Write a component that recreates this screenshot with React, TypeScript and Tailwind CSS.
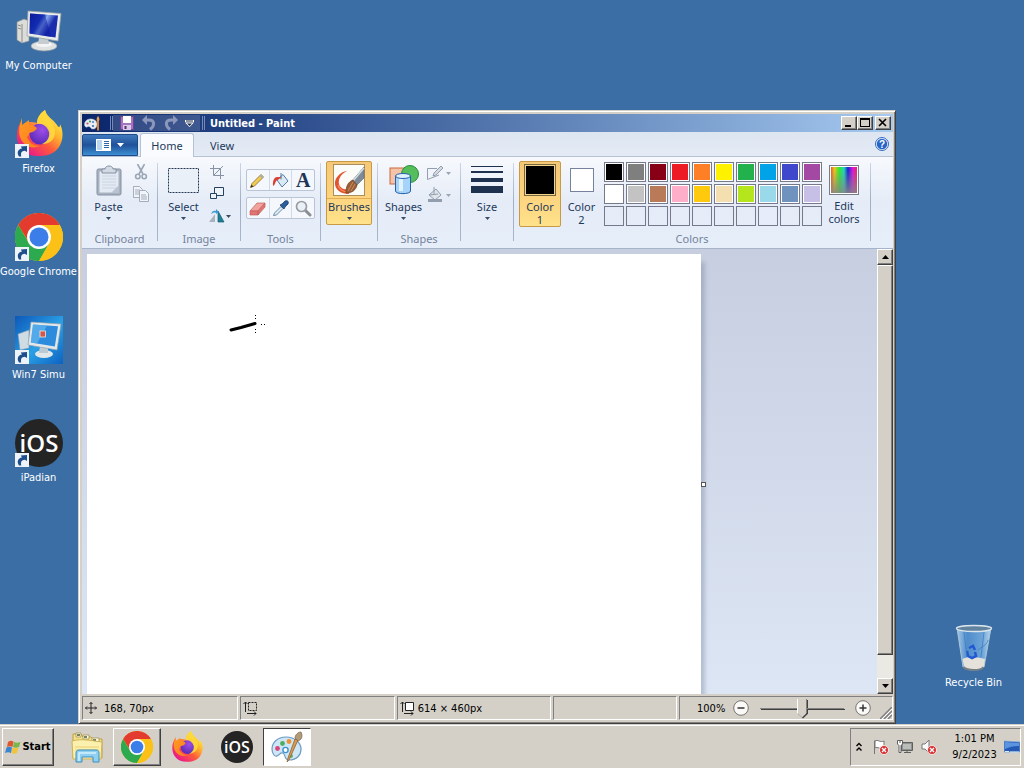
import React, { useId } from "react";

const tahoma = "font-['DejaVu_Sans_Condensed','DejaVu_Sans',sans-serif]";

function ShortcutBadge() {
  return (
    <svg viewBox="0 0 14 14" className="absolute bottom-0 left-0 size-3.5" aria-hidden="true">
      <rect width="14" height="14" fill="#eef3fa" />
      <path d="M4 12.500C1.500 9 3 5.200 7 4.600L5.800 2.400 12 2v6L9.800 6.800C6.500 7 5.500 9 6.300 12.500Z" fill="#1f4e8c" />
    </svg>
  );
}

function ComputerIcon({ className }: { className?: string }) {
  const id = useId();
  return (
    <svg viewBox="0 0 48 48" className={className} aria-hidden="true">
      <defs>
        <linearGradient id={id} x1="0" y1="0" x2="1" y2="0.5">
          <stop offset="0" stopColor="#0b1a96" />
          <stop offset="0.4" stopColor="#1c3fc4" />
          <stop offset="0.55" stopColor="#86a8ee" />
          <stop offset="0.8" stopColor="#1a2cae" />
        </linearGradient>
      </defs>
      <path d="M2 15 9 12 14 14V34L7 36 2 33Z" fill="#dcdcd8" stroke="#8c9096" strokeWidth=".7" />
      <path d="M7 17v18M3 18l3 1M3 21l3 1" stroke="#8a8c88" strokeWidth="1" />
      <ellipse cx="29" cy="39" rx="13" ry="5" fill="#dfe2e2" stroke="#8f969c" strokeWidth=".7" />
      <ellipse cx="29" cy="37.500" rx="8" ry="2.500" fill="#f4f5f4" />
      <path d="M24 31h9l1 6h-11Z" fill="#c6cccf" />
      <path d="M13 4 46 6.500 43 34 12 29Z" fill="#e9ece8" stroke="#9ba3a8" strokeWidth=".8" />
      <path d="M15 6.500 43 8.500 40.500 30.500 14.500 26.500Z" fill={`url(#${id})`} />
      <path d="M15 6.500 30 7.500 36 30 14.500 26.500Z" fill="#0919a0" opacity=".5" />
    </svg>
  );
}

function FirefoxIcon({ className }: { className?: string }) {
  const id = useId();
  return (
    <svg viewBox="0 0 48 48" className={className} aria-hidden="true">
      <defs>
        <linearGradient id={`${id}a`} x1=".85" y1=".1" x2=".15" y2=".9">
          <stop offset="0" stopColor="#fff04a" />
          <stop offset=".3" stopColor="#ffb52e" />
          <stop offset=".6" stopColor="#ff5a3a" />
          <stop offset="1" stopColor="#e8188c" />
        </linearGradient>
        <radialGradient id={`${id}b`} cx=".6" cy=".3" r=".7">
          <stop offset="0" stopColor="#a04de8" />
          <stop offset="1" stopColor="#5a2cb8" />
        </radialGradient>
        <linearGradient id={`${id}c`} x1="0" y1="0" x2="1" y2="1">
          <stop offset="0" stopColor="#ff9c24" />
          <stop offset="1" stopColor="#ff7a1c" />
        </linearGradient>
      </defs>
      <path d="M30 0c2 7 8 9 12 15 2 3 3 3 3-1 4 8 3 17-1 23-4 6-11 9-19 9C10 47 1 37 2 24c0-5 2-10 5-14v6c2-2 4-3 7-4 3 0 6 0 8 1 0-6 4-10 8-13Z" fill={`url(#${id}a)`} />
      <circle cx="25" cy="24" r="10.500" fill={`url(#${id}b)`} />
      <path d="M7 8v7l7-5v5c3 0 6 1 8 3-1 3-4 4-8 5 0 2-1 3-2 4 2 5 6 9 13 9-9 4-17-1-20-9-2-6 0-13 2-19Z" fill={`url(#${id}c)`} />
      <path d="M22 14c5-1 10 2 12 8 1 5-2 10-7 12 9 0 14-6 13-14-1-7-8-11-10-20-5 3-8 8-8 14Z" fill="#ffd93c" opacity=".9" />
    </svg>
  );
}

function ChromeIcon({ className }: { className?: string }) {
  return (
    <svg viewBox="0 0 48 48" className={className} aria-hidden="true">
      <circle cx="24" cy="24" r="24" fill="#fbc116" />
      <path d="M3.200 12A24 24 0 0 1 44.800 12H24L14.500 30Z" fill="#e33b2e" />
      <path d="M3.200 12A24 24 0 0 0 24 48L34.400 30 24 34 14 30Z" fill="#2da94f" />
      <path d="M24 12h20.800A24 24 0 0 1 24 48l10.400-18Z" fill="#fbc116" />
      <circle cx="24" cy="24" r="12" fill="#fff" />
      <circle cx="24" cy="24" r="9.500" fill="#3b7de9" />
    </svg>
  );
}

function WinSimuIcon({ className }: { className?: string }) {
  const id = useId();
  return (
    <svg viewBox="0 0 48 48" className={className} aria-hidden="true">
      <defs>
        <linearGradient id={id} x1="0" y1="0" x2="1" y2="1">
          <stop offset="0" stopColor="#0d58b8" />
          <stop offset=".55" stopColor="#2aa0e6" />
          <stop offset="1" stopColor="#0c62c0" />
        </linearGradient>
      </defs>
      <rect width="48" height="48" fill={`url(#${id})`} />
      <path d="M3 18 14 14V32L5 34Z" fill="#cfdce4" stroke="#7e98ac" strokeWidth=".6" />
      <ellipse cx="29" cy="38" rx="9" ry="4" fill="#e1e8ea" />
      <path d="M25 30h8v7h-9Z" fill="#bccbd3" />
      <path d="M16 6 46 8 42 34 13 29Z" fill="#e2e8ea" stroke="#8fa2ae" strokeWidth=".7" />
      <path d="M18 8.500 43 10.200 39.800 30.500 15.800 26.500Z" fill="#2c8bdc" />
      <path d="M18 8.500 32 9.500 22 27.500 15.800 26.500Z" fill="#6cc0f4" opacity=".6" />
      <rect x="25" y="15" width="5.500" height="6" fill="#d4584a" stroke="#f2e5dc" strokeWidth=".8" />
    </svg>
  );
}

function IosIcon({ className }: { className?: string }) {
  return (
    <svg viewBox="0 0 48 48" className={className} aria-hidden="true">
      <circle cx="24" cy="24" r="24" fill="#242424" />
      <text x="24" y="33" textAnchor="middle" fontFamily="'Open Sans', sans-serif" fontWeight="600" fontSize="24" fill="#fff">iOS</text>
    </svg>
  );
}

function RecycleIcon({ className }: { className?: string }) {
  const id = useId();
  return (
    <svg viewBox="0 0 48 48" className={className} aria-hidden="true">
      <defs>
        <linearGradient id={id} x1="0" y1="0" x2="1" y2="0">
          <stop offset="0" stopColor="#a5c8e6" />
          <stop offset=".3" stopColor="#4f8ccb" />
          <stop offset=".75" stopColor="#6ea5d8" />
          <stop offset="1" stopColor="#b9d6ec" />
        </linearGradient>
      </defs>
      <path d="M7 4 13 43c3 4 18 4 21 0L41 4Z" fill={`url(#${id})`} stroke="#a9c4da" strokeWidth="1" />
      <path d="M12.500 35c4-2 7-2 10-1 4-1 8 0 12.500 1l-1 8c-4 4-17 4-20 0Z" fill="#e4e2da" />
      <path d="M13.500 43c4 4 17 4 20 0" stroke="#777e84" strokeWidth="2" fill="none" />
      <path d="M19 24l4-2 2 4M17 27l1 5 4 2 4-2-1-4" stroke="#2258d2" strokeWidth="2.500" fill="none" />
      <path d="M28 26c5-4 9-5 10-10M14 8l3 25M34 8l-3 25" stroke="#3b77bd" strokeWidth="1" fill="none" opacity=".7" />
      <ellipse cx="24" cy="4.500" rx="17.500" ry="3" fill="#61839f" stroke="#dbe6ec" strokeWidth="1.400" />
    </svg>
  );
}

function PaletteIcon({ className }: { className?: string }) {
  return (
    <svg viewBox="0 0 32 32" className={className} aria-hidden="true">
      <path d="M15 6C6 6 1 12 1 18c0 5 3 8 5 7 3-1 3-4 6-3 3 2 1 7 6 7 8 0 12-5 12-11S24 6 15 6Z" fill="#cfe6f6" stroke="#6c9cc0" strokeWidth="1.200" />
      <circle cx="6.500" cy="17.500" r="2.400" fill="#d8457a" />
      <circle cx="11.500" cy="12.500" r="2.400" fill="#4bae62" />
      <circle cx="18" cy="10.500" r="2.400" fill="#f08f34" />
      <circle cx="14.500" cy="19" r="2.600" fill="#fff" stroke="#3d94cf" strokeWidth="1.400" />
      <circle cx="20" cy="25" r="2" fill="#58b86c" />
      <path d="M27 9 18 29l-2 2 1-4 7-19Z" fill="#d79a55" stroke="#8f6232" strokeWidth=".8" />
      <path d="M24 7c0-3 3-6 6-6l1 3c0 3-1 5-4 6Z" fill="#b39a78" stroke="#76624a" strokeWidth=".7" />
    </svg>
  );
}

function PaintWindowIcon() {
  return (
    <svg viewBox="0 0 16 16" className="size-4" aria-hidden="true">
      <path d="M6.500 4C2.500 4 .5 7 .5 9.500c0 2 1.500 3 2.500 2.500s2-1 3 0 1 2 3 2c3 0 4-2.500 4-5S11 4 6.500 4Z" fill="#e8edf4" stroke="#b6c4d6" strokeWidth=".6" />
      <circle cx="3.500" cy="8.500" r="1.100" fill="#c8506a" />
      <circle cx="6" cy="6.500" r="1.100" fill="#3f9c68" />
      <circle cx="9" cy="7" r="1.100" fill="#4a86c8" />
      <circle cx="9" cy="11" r="1.100" fill="#3a6db0" />
      <path d="M13 6h2v9l-1 1-1-1Z" fill="#d9822b" />
      <path d="M13 6c-1-2 0-4 1-5 1 1 2 3 1 5Z" fill="#e8a04a" />
    </svg>
  );
}

function FolderIcon({ className }: { className?: string }) {
  return (
    <svg viewBox="0 0 32 32" className={className} aria-hidden="true">
      <path d="M2 3h8l2 3h8l2 2h9v19H2Z" fill="#f5e08a" stroke="#c0a03e" strokeWidth="1" />
      <path d="M5 2h5v4H5ZM12 4h6v4h-6ZM21 7h7v4h-7Z" fill="#fffbe2" stroke="#a39354" strokeWidth=".8" />
      <path d="M6 4h3M13 6h3M22 9h3" stroke="#4b5f33" strokeWidth="1.300" />
      <path d="M1 10c10-3 20 0 30 1l-1 17H2Z" fill="#fbf0ae" stroke="#cfb355" strokeWidth="1" />
      <path d="M4 16h24M4 19h24" stroke="#e9d173" strokeWidth="1" />
      <path d="M5 31V22c0-2 1-3 3-3h17c2 0 3 1 3 3v9h-6v-5H11v5Z" fill="#8fd0f2" stroke="#3d8fc0" strokeWidth="1" />
      <path d="M8 30v-8h17" stroke="#d6f1fc" strokeWidth="1.500" fill="none" />
    </svg>
  );
}

function DownArrow({ className = "fill-[#3a4a62]" }: { className?: string }) {
  return (
    <svg viewBox="0 0 5 3" className={`h-[3px] w-[5px] shrink-0 ${className}`} aria-hidden="true">
      <path d="M0 0h5L2.500 3Z" />
    </svg>
  );
}

const desktopIcons = [
  { name: "My Computer", Icon: ComputerIcon, shortcut: false },
  { name: "Firefox", Icon: FirefoxIcon, shortcut: true },
  { name: "Google Chrome", Icon: ChromeIcon, shortcut: true },
  { name: "Win7 Simu", Icon: WinSimuIcon, shortcut: true },
  { name: "iPadian", Icon: IosIcon, shortcut: true },
];

function DesktopItem({ name, Icon, shortcut }: { name: string; Icon: React.FC<{ className?: string }>; shortcut: boolean }) {
  return (
    <button className="flex w-[77px] flex-col items-center gap-1 whitespace-nowrap">
      <span className="relative size-12">
        <Icon className="size-12" />
        {shortcut && <ShortcutBadge />}
      </span>
      <span className="text-[11px] leading-[14px] text-white">{name}</span>
    </button>
  );
}

function Group({ label, children, className = "" }: { label?: string; children: React.ReactNode; className?: string }) {
  return (
    <>
      <section aria-label={label} className={`flex h-[85px] flex-col justify-between ${className}`}>
        <div className="flex">{children}</div>
        {label && <div className="text-center text-[11px] leading-[14px] text-[#75839b]">{label}</div>}
      </section>
      <div className="mt-0.5 h-[78px] w-px shrink-0 bg-gradient-to-b from-[#cdd6e4] via-[#9fafc6] to-[#a9b5c9]" />
    </>
  );
}

function BigButton({ label, children, active = false, className = "" }: { label: string; children: React.ReactNode; active?: boolean; className?: string }) {
  return (
    <button
      className={`flex h-16 flex-col items-center rounded-[2px] border ${
        active ? "border-[#c79a45] bg-gradient-to-b from-[#f5c877] via-[#fcd27e] to-[#ffe28b]" : "border-transparent"
      } ${className}`}
    >
      <span className={`flex h-[37px] w-full items-center justify-center border-b ${active ? "border-[#e3ae56]" : "border-transparent"}`}>{children}</span>
      <span className="text-[11px] leading-4 text-[#1e395b]">{label}</span>
      <span className="mt-0.5"><DownArrow /></span>
    </button>
  );
}

const swatches = [
  "bg-black", "bg-[#7f7f7f]", "bg-[#880015]", "bg-[#ed1c24]", "bg-[#ff7f27]", "bg-[#fff200]", "bg-[#22b14c]", "bg-[#00a2e8]", "bg-[#3f48cc]", "bg-[#a349a4]",
  "bg-white", "bg-[#c3c3c3]", "bg-[#b97a57]", "bg-[#ffaec9]", "bg-[#ffc90e]", "bg-[#f3dfb0]", "bg-[#b5e61d]", "bg-[#99d9ea]", "bg-[#7092be]", "bg-[#c8bfe7]",
  "", "", "", "", "", "", "", "", "", "",
];

const toolIcons: { name: string; art: React.ReactNode }[] = [
  { name: "Pencil", art: <><path d="M1.500 15.500 3 11.500 12 2.500l2.500 2.500-9 9Z" fill="#f2cc52" stroke="#856a2e" strokeWidth=".8" /><path d="m12 2.500 2.500 2.500-1.500 1.500L10.500 4Z" fill="#a8b0ad" /><path d="m1.500 15.500 1-2.800 1.800 1.800Z" fill="#222" /></> },
  { name: "Fill with color", art: <><path d="m5 8 6-5.500 5 6.500-6 6Z" fill="#dbe9f4" stroke="#557da3" /><path d="M6 5C2.500 4.500.5 8 1 14c2.500-1 2-5 4.500-6L10 5Z" fill="#dd4033" /><path d="M9 1v6.500" stroke="#557da3" fill="none" /></> },
  { name: "Text", art: <path d="M0 0" /> },
  { name: "Eraser", art: <><path d="M1 11 8 3h8l-7 8Z" fill="#f3a39d" stroke="#c25e5c" strokeWidth=".7" /><path d="M1 11h8v4H1ZM9 11l7-8v4l-7 8Z" fill="#e27673" stroke="#c25e5c" strokeWidth=".7" /></> },
  { name: "Color picker", art: <><path d="m1.500 15.500 1-2.500 6.500-6.500 2 2-6.500 6.500Z" fill="#dcebf5" stroke="#537596" strokeWidth=".8" /><path d="m8 5 2-1 3-3c3-1 4 1 3 3l-3 3-1 2Z" fill="#2c5d9c" stroke="#1c3f70" strokeWidth=".8" /></> },
  { name: "Magnifier", art: <><path d="m10.500 10.500 4.500 4.500" stroke="#8b8d92" strokeWidth="3" strokeLinecap="round" /><circle cx="6.500" cy="6.500" r="5" fill="#e9f1f7" stroke="#9a9da3" strokeWidth="1.700" /></> },
];

function ToolRow({ tools }: { tools: typeof toolIcons }) {
  return (
    <div className="flex h-[22px] w-[69px] divide-x divide-[#d2dae6] rounded-[2px] border border-[#b9c5d6] bg-[#f4f7fb]">
      {tools.map((t) => (
        <button key={t.name} aria-label={t.name} className="flex flex-1 items-center justify-center">
          {t.name === "Text" ? (
            <span className="font-['Liberation_Serif',serif] text-xl leading-5 font-bold text-[#1d3556]">A</span>
          ) : (
            <svg viewBox="0 0 17 17" className="size-[17px]" fill="none">{t.art}</svg>
          )}
        </button>
      ))}
    </div>
  );
}

function Ribbon() {
  return (
    <div className="flex h-[92px] shrink-0 overflow-hidden border-b border-[#a6b4ca] bg-gradient-to-b from-[#f7f9fd] via-[#e5ecf7] to-[#e6eefa] pt-1 font-['Noto_Sans',sans-serif]">
      <Group label="Clipboard" className="w-[75px]">
        <BigButton label="Paste" className="ml-1 w-[45px]">
          <svg viewBox="0 0 26 31" className="h-[31px] w-[26px]" aria-hidden="true">
            <rect x="1" y="4" width="24" height="26" rx="1.500" fill="#a9b2bf" stroke="#8491a3" />
            <rect x="3.500" y="6.500" width="19" height="21" fill="#e3eaf3" />
            <path d="M6 11h14M6 14h14M6 17h14M6 20h14M6 23h14" stroke="#cbd5e2" />
            <path d="M6 4h3c0-4 8-4 8 0h3v4H6Z" fill="#d3dae3" stroke="#8491a3" />
            <path d="m15 28 8-8v8Z" fill="#b8c2d0" />
          </svg>
        </BigButton>
        <div className="flex flex-col gap-1 pt-0.5">
          <button aria-label="Cut" className="flex h-[18px] w-[19px] items-center justify-center">
            <svg viewBox="0 0 14 16" className="h-4 w-3.5" fill="none" stroke="#9aa5b5" strokeWidth="1.600">
              <path d="M3.500 0 9 10M10.500 0 5 10" /><circle cx="3.800" cy="12.500" r="2.200" /><circle cx="10.200" cy="12.500" r="2.200" />
            </svg>
          </button>
          <button aria-label="Copy" className="flex h-[18px] w-[19px] items-center justify-center">
            <svg viewBox="0 0 16 16" className="size-4" fill="#f1f4f8" stroke="#a3adbc">
              <path d="M.5.500h6l3 3v8h-9Z" /><path d="M2 4h5M2 6h5M2 8h4" /><path d="M6.500 4.500h6l3 3v8h-9Z" /><path d="M8 9h5M8 11h6M8 13h6" />
            </svg>
          </button>
        </div>
      </Group>

      <Group label="Image" className="w-[82px]">
        <BigButton label="Select" className="ml-0.5 w-[47px]">
          <svg viewBox="0 0 31 25" className="h-[25px] w-[31px]" aria-hidden="true">
            <rect x=".5" y=".5" width="30" height="24" fill="#eaf0f8" stroke="#24364f" strokeDasharray="2 1" />
          </svg>
        </BigButton>
        <div className="flex flex-col gap-1 pt-0.5">
          <button aria-label="Crop" className="flex h-[18px] w-5 items-center justify-center">
            <svg viewBox="0 0 14 14" className="size-3.5" fill="none" stroke="#8793a5"><path d="M3.500 0v10.500H14M0 3.500h10.500V14M4 10l9-9" /></svg>
          </button>
          <button aria-label="Resize" className="flex h-[18px] w-5 items-center justify-center">
            <svg viewBox="0 0 14 14" className="size-3.5" fill="#eef3fa" stroke="#23425f"><path d="M4.500.500h9v8h-9Z" /><path d="M.5 6.500h6v5h-6Z" /></svg>
          </button>
          <button aria-label="Rotate" className="flex h-[18px] w-[25px] items-center gap-px pl-0.5">
            <svg viewBox="0 0 16 14" className="h-3.5 w-4"><path d="m6 5-6 8h6Z" fill="#a9b2bd" /><path d="M9 2v11h6Z" fill="#1d7f92" stroke="#165e70" strokeWidth=".7" /><path d="M2 5c1-3 3-4 5-3L7 0l3 3-3 2V4C5 3 4 4 2 5Z" fill="#3b9bd0" /></svg>
            <DownArrow />
          </button>
        </div>
      </Group>

      <Group label="Tools" className="w-[79px]">
        <div className="flex flex-col gap-1.5 pt-2 pl-[5px]">
          <ToolRow tools={toolIcons.slice(0, 3)} />
          <ToolRow tools={toolIcons.slice(3)} />
        </div>
      </Group>

      <Group className="w-14 items-center">
        <BigButton label="Brushes" active className="w-[46px]">
          <svg viewBox="0 0 32 32" className="size-8" aria-hidden="true">
            <rect x=".5" y=".5" width="31" height="31" fill="#fbfbf8" stroke="#ab8e5c" />
            <path d="M31 3v11l-8 8-4-5Z" fill="#7d8b99" stroke="#5c6570" strokeWidth=".6" />
            <path d="M31 4 20 17l2 3" stroke="#d5dde4" strokeWidth="1.500" fill="none" />
            <path d="M14 7C7 8 1.500 14 2 20c.5 6 6 10 14 10l-1-5c-4 1-8-1-9-5-1-5 2-10 8-13Z" fill="#e2532f" />
            <path d="M5 21c1 4 5 7 10 7" stroke="#f58a5e" strokeWidth="1.200" fill="none" />
            <path d="M13 29c0-7 2-11 7-13l4 5c-1 5-5 8-11 8Z" fill="#9b5e37" stroke="#6b3d21" strokeWidth=".7" />
            <path d="m15 27 5-9M18 27l4-7" stroke="#c78d5f" />
          </svg>
        </BigButton>
      </Group>

      <Group label="Shapes" className="w-[82px]">
        <BigButton label="Shapes" className="ml-[3px] w-[45px]">
          <svg viewBox="0 0 30 30" className="size-[30px]" aria-hidden="true">
            <rect x="1" y="3" width="16" height="16" fill="#f5c3a8" stroke="#c9683d" /><circle cx="21" cy="9" r="8.500" fill="#54bd5c" stroke="#2c8c3c" />
            <path d="M6.500 11v15c0 3.500 15 3.500 15 0V11Z" fill="#a5d3fa" stroke="#2462ac" /><path d="M10 12v14h4V12Z" fill="#e1f2ff" /><ellipse cx="14" cy="11" rx="7.500" ry="2.500" fill="#dff0fe" stroke="#2462ac" />
          </svg>
        </BigButton>
        <div className="flex flex-col gap-1 pt-[3px]">
          <button aria-label="Shape outline" className="flex h-[18px] w-[26px] items-center gap-0.5">
            <svg viewBox="0 0 18 16" className="h-4 w-[18px]" fill="none" stroke="#929eae"><path d="M11 3.500H1.500v11L13 10" /><path d="m7 11 1-3 7-7 2 2-7 7Z" fill="#d4dae2" /></svg>
            <DownArrow className="fill-[#9aa5b5]" />
          </button>
          <button aria-label="Shape fill" className="flex h-[18px] w-[26px] items-center gap-0.5">
            <svg viewBox="0 0 18 16" className="h-4 w-[18px]" stroke="#929eae"><path d="M3 8 10 2l5 6-6 5Z" fill="#e0e5ec" /><path d="M8 0v7M3 8l9-1" fill="none" /><path d="M2 13.500h14" strokeWidth="3" /></svg>
            <DownArrow className="fill-[#9aa5b5]" />
          </button>
        </div>
      </Group>

      <Group className="w-[52px] items-center">
        <BigButton label="Size" className="w-11">
          <svg viewBox="0 0 32 28" className="h-7 w-8" fill="#1e3250" aria-hidden="true"><path d="M0 0h32v1H0ZM0 5h32v2H0ZM0 12h32v4H0ZM0 20h32v7H0Z" /></svg>
        </BigButton>
      </Group>

      <Group label="Colors" className="w-[356px]">
        <button className="ml-[5px] flex h-[66px] w-[42px] flex-col items-center rounded-[2px] border border-[#c79a45] bg-gradient-to-b from-[#f5c877] via-[#fcd27e] to-[#ffe28b] pt-0.5 text-[11px] leading-[13px] text-[#1e395b]">
          <span className="mb-1 size-8 shrink-0 border border-[#75683f] bg-black outline-1 -outline-offset-2 outline-[#f7d48c]" />
          <span className="w-8">Color 1</span>
        </button>
        <button className="flex h-[66px] w-[41px] flex-col items-center pt-[7px] text-[11px] leading-[13px] text-[#1e395b]">
          <span className="mb-2 size-6 shrink-0 border border-[#75839b] bg-white" />
          <span className="w-8">Color 2</span>
        </button>
        <div className="mt-px ml-0.5 grid grid-cols-10 content-start gap-0.5">
          {swatches.map((c, i) => (
            <button key={i} aria-label={`Swatch ${i + 1}`} className="size-5 border border-[#75798a] p-px">
              <span className={`block size-full ${c ? "outline-1 outline-white " + c : ""}`} />
            </button>
          ))}
        </div>
        <button className="flex w-11 flex-col items-center pt-1 text-[11px] leading-[13px] text-[#1e395b]">
          <svg viewBox="0 0 30 30" className="mb-1 size-[30px]" aria-hidden="true">
            <defs>
              <linearGradient id="spectrum"><stop offset="0" stopColor="#ef5a20" /><stop offset=".13" stopColor="#e9c51f" /><stop offset=".32" stopColor="#30e830" /><stop offset=".5" stopColor="#22d5ba" /><stop offset=".65" stopColor="#1822cd" /><stop offset=".84" stopColor="#d819e0" /><stop offset="1" stopColor="#ee2556" /></linearGradient>
              <linearGradient id="fade" x2="0" y2="1"><stop offset=".1" stopColor="#858585" stopOpacity="0" /><stop offset="1" stopColor="#858585" stopOpacity=".85" /></linearGradient>
            </defs>
            <rect x=".5" y=".5" width="29" height="29" fill="#fff" stroke="#777d89" /><path d="M2 2h26v26H2Z" fill="url(#spectrum)" /><path d="M2 2h26v26H2Z" fill="url(#fade)" />
          </svg>
          <span className="w-9">Edit colors</span>
        </button>
      </Group>
    </div>
  );
}

const raised = "border border-t-white border-l-white border-r-[#404040] border-b-[#404040] bg-[#d4d0c8] shadow-[inset_-1px_-1px_0_#808080]";
const sunken = "border border-t-[#808080] border-l-[#808080] border-r-white border-b-white";

function TitleBar() {
  return (
    <header className="flex h-[18px] shrink-0 items-center bg-gradient-to-r from-[#0a246a] to-[#a6caf0] px-0.5">
      <PaintWindowIcon />
      <div className="ml-2.5 h-3.5 w-[3px] border-x border-[#7688b5]" />
      <div className="flex items-center gap-1.5 bg-white/15 px-1.5">
        <button aria-label="Save">
          <svg viewBox="0 0 16 16" className="size-4"><path d="M1.500 1.500h13v13h-13Z" fill="#a274c0" stroke="#6b4292" /><path d="M4 1h8v7H4Z" fill="#fff" /><path d="M4 10h8v5H4Z" fill="#dac8e8" /><path d="M5.500 11h2v3h-2Z" fill="#51336d" /></svg>
        </button>
        <button aria-label="Undo">
          <svg viewBox="0 0 16 16" className="size-4" fill="none" stroke="#8b98bb" strokeWidth="3"><path d="M4 5h4c6 0 6 6 1 9.500" /><path d="M6 0v10L1 5Z" fill="#8b98bb" stroke="none" /></svg>
        </button>
        <button aria-label="Redo">
          <svg viewBox="0 0 16 16" className="size-4" fill="none" stroke="#8b98bb" strokeWidth="3"><path d="M12 5H8c-6 0-6 6-1 9.500" /><path d="M10 0v10l5-5Z" fill="#8b98bb" stroke="none" /></svg>
        </button>
        <button aria-label="Customize toolbar">
          <svg viewBox="0 0 9 7" className="h-[7px] w-[9px]"><path d="M0 0h9v2H0ZM0 2.500h9L4.500 7Z" fill="#fff" /><path d="M1 .5h7v1H1ZM2 3.500h5L4.500 6Z" fill="#1b2742" /></svg>
        </button>
      </div>
      <div className="ml-0.5 h-3.5 w-[3px] border-x border-[#7688b5]" />
      <h1 className="ml-[5px] pt-0.5 text-[11px] leading-4 font-bold text-white">Untitled - Paint</h1>
      <div className="ml-auto flex">
        <button aria-label="Minimize" className={`flex h-3.5 w-4 items-center justify-center ${raised}`}><svg viewBox="0 0 12 10" className="h-2.5 w-3"><path d="M2 7h6v2H2Z" /></svg></button>
        <button aria-label="Maximize" className={`mr-0.5 flex h-3.5 w-4 items-center justify-center ${raised}`}><svg viewBox="0 0 12 10" className="h-2.5 w-3"><path d="M1 0h10v9H1ZM2 2v6h8V2Z" fillRule="evenodd" /></svg></button>
        <button aria-label="Close" className={`flex h-3.5 w-4 items-center justify-center ${raised}`}><svg viewBox="0 0 12 10" className="h-2.5 w-3" stroke="#000" strokeWidth="1.600"><path d="m2 1 7 7M9 1 2 8" /></svg></button>
      </div>
    </header>
  );
}

function TabBar() {
  return (
    <nav className="flex h-[25px] shrink-0 items-end border-b border-[#b5c2d6] bg-gradient-to-b from-[#dde5f1] to-[#e4ebf5] font-['Noto_Sans',sans-serif] text-[11px] text-[#1e395b]">
      <button aria-label="Paint menu" className="mr-0.5 flex h-[22px] w-14 items-center justify-center gap-1.5 rounded-t-[2px] border border-[#1f4b8b] bg-gradient-to-b from-[#3f79bd] via-[#205199] to-[#3d8fd2]">
        <svg viewBox="0 0 15 12" className="h-3 w-[15px]"><path d="M0 0h15v12H0Z" fill="#fff" /><path d="M1 1h5v10H1Z" fill="#b8d6f0" /><path d="M8 2.500h5M8 4.500h5M8 6.500h5M8 8.500h5" stroke="#2f67a8" /></svg>
        <svg viewBox="0 0 7 4" className="h-1 w-[7px]" fill="#fff"><path d="M0 0h7L3.500 4Z" /></svg>
      </button>
      <button className="-mb-px h-6 w-[54px] rounded-t-[3px] border border-b-0 border-[#b5c2d6] bg-[#f9fbfe] pt-px">Home</button>
      <button className="-mb-px h-6 w-14 pt-0.5">View</button>
      <button aria-label="Help" className="mr-1 mb-[5px] ml-auto">
        <svg viewBox="0 0 14 14" className="size-3.5"><circle cx="7" cy="7" r="6.500" fill="#e8f1fc" stroke="#3569bd" /><circle cx="7" cy="7" r="5.200" fill="#2965c7" /><text x="7" y="10.800" fontSize="10" fontWeight="700" fontFamily="'Liberation Sans', sans-serif" textAnchor="middle" fill="#fff">?</text></svg>
      </button>
    </nav>
  );
}

function Workspace() {
  return (
    <main className="flex min-h-0 flex-1 bg-gradient-to-b from-[#c6cee0] to-[#dde6f4]">
      <div className="relative min-w-0 flex-1 overflow-hidden pt-[5px] pl-[5px]">
        <div className="relative h-[460px] w-[614px] bg-white shadow-[4px_8px_4px_rgba(120,132,160,0.4)]">
          <svg viewBox="0 0 614 460" className="h-full w-full" aria-label="Drawing">
            <path d="m144 76 10-2.500 14-4" stroke="#000" strokeWidth="3" strokeLinecap="round" fill="none" />
            <path d="M168 61.500h1m-1 3h1m-1 11h1m-1 3h1m5-8h1m2 0h1" stroke="#000" />
          </svg>
          <div className="absolute top-[228px] left-full size-[5px] border border-[#555] bg-white" />
        </div>
      </div>
      <div className="flex w-4 shrink-0 flex-col bg-[#ebe9e4]">
        <button aria-label="Scroll up" className={`flex h-4 items-center justify-center ${raised}`}><svg viewBox="0 0 7 4" className="h-1 w-[7px]"><path d="M3.500 0 7 4H0Z" /></svg></button>
        <div className={`mb-[23px] flex-1 ${raised}`} />
        <button aria-label="Scroll down" className={`flex h-4 items-center justify-center ${raised}`}><svg viewBox="0 0 7 4" className="h-1 w-[7px]"><path d="M0 0h7L3.500 4Z" /></svg></button>
      </div>
    </main>
  );
}

function StatusBar() {
  const size = "M2.500 11V1M.5 3l2-2 2 2M4 12.500h9M11 10.500l2 2-2 2";
  return (
    <footer className="flex h-[26px] shrink-0 gap-0.5 pt-0.5 text-[11px] text-black">
      <div className={`flex h-6 flex-[156] items-center gap-[7px] pl-0.5 ${sunken}`}>
        <svg viewBox="0 0 12 12" className="size-3" fill="none" stroke="#222"><path d="M6 .5v11M.5 6h11M4.500 2 6 .5 7.500 2M4.500 10 6 11.500 7.500 10M2 4.500.5 6 2 7.500M10 4.500 11.500 6 10 7.500" /></svg>
        <span className="pt-0.5">168, 70px</span>
      </div>
      <div className={`flex h-6 flex-[154] items-center pl-0.5 ${sunken}`}>
        <svg viewBox="0 0 14 15" className="h-[15px] w-3.5" fill="none" stroke="#222"><path d={size} /><path d="M5.500 1.500h8v8h-8Z" strokeDasharray="2 1" /></svg>
      </div>
      <div className={`flex h-6 flex-[154] items-center gap-1 pl-0.5 ${sunken}`}>
        <svg viewBox="0 0 14 15" className="h-[15px] w-3.5" fill="none" stroke="#222"><path d={size} /><path d="M5.500 1.500h8v8h-8Z" fill="#fff" /></svg>
        <span className="pt-0.5">614 × 460px</span>
      </div>
      <div className={`h-6 flex-[125] ${sunken}`} />
      <div className={`flex h-6 w-[214px] shrink-0 items-center pl-[17px] ${sunken}`}>
        <label htmlFor="zoom" className="w-9 pt-0.5">100%</label>
        <button aria-label="Zoom out"><svg viewBox="0 0 16 16" className="size-4"><circle cx="8" cy="8" r="7.300" fill="#faf9f7" stroke="#77746f" /><path d="M4.500 8h7" stroke="#333" strokeWidth="1.500" /></svg></button>
        <input
          id="zoom"
          type="range"
          defaultValue="50"
          className="mx-[11px] h-5 w-[84px] appearance-none bg-[linear-gradient(#808080,#808080)] bg-[length:100%_1px] bg-center bg-no-repeat drop-shadow-[1px_1px_0_#404040] [&::-webkit-slider-thumb]:h-[19px] [&::-webkit-slider-thumb]:w-2.5 [&::-webkit-slider-thumb]:appearance-none [&::-webkit-slider-thumb]:bg-[linear-gradient(90deg,#fff_0_1px,#d4d0c8_1px_9px,#808080_9px)] [&::-webkit-slider-thumb]:[clip-path:polygon(0_0,100%_0,100%_75%,50%_100%,0_75%)]"
        />
        <button aria-label="Zoom in"><svg viewBox="0 0 16 16" className="size-4"><circle cx="8" cy="8" r="7.300" fill="#faf9f7" stroke="#77746f" /><path d="M4.500 8h7M8 4.500v7" stroke="#333" strokeWidth="1.500" /></svg></button>
        <svg viewBox="0 0 12 12" className="mt-auto ml-auto size-3" strokeWidth="1.500" aria-hidden="true"><path d="M0 12 12 0M4 12l8-8M8 12l4-4" stroke="#808080" /><path d="M2 12 12 2M6 12l6-6" stroke="#fff" strokeWidth="1" /></svg>
      </div>
    </footer>
  );
}

const taskbarItems = [
  { name: "File Explorer", Icon: FolderIcon, look: "" },
  { name: "Google Chrome", Icon: ChromeIcon, look: "border border-t-white border-l-white border-r-[#404040] border-b-[#404040] shadow-[inset_-1px_-1px_0_#808080]" },
  { name: "Firefox", Icon: FirefoxIcon, look: "" },
  { name: "iPadian", Icon: IosIcon, look: "" },
  { name: "Paint", Icon: PaletteIcon, look: "border border-t-[#404040] border-l-[#404040] border-r-white border-b-white bg-white" },
];

function Taskbar() {
  return (
    <footer className="flex h-11 shrink-0 border-t border-[#d4d0c8] bg-[#d4d0c8] pt-[3px] pr-[3px] pb-0.5 pl-0.5 text-[11px] text-black shadow-[inset_0_1px_0_white]">
      <button className={`mr-[9px] flex w-[52px] items-center justify-center gap-px font-bold ${raised}`}>
        <svg viewBox="0 0 16 16" className="size-4" aria-hidden="true"><path d="M3 3c2-1.500 3.500-1.500 5.500-.500L7.500 8C5.500 7 4 7 2 8Z" fill="#dd5731" /><path d="M9 3c2 1 4 1 6.500 0L14 8c-2 1-4 1-6 0Z" fill="#79b64b" /><path d="M1.500 8.500c2-1 3.500-1 5.500 0l-1 5.500c-2-1-4-1-6 0Z" fill="#3a85cf" /><path d="M7.500 8.500c2 1 4 1 6 0L12 14c-2 1-4 1-5.500 0Z" fill="#f1c43b" /></svg>
        Start
      </button>
      <div className="flex gap-0.5">
        {taskbarItems.map(({ name, Icon, look }) => (
          <button key={name} aria-label={name} className={`flex w-12 items-center justify-center ${look}`}>
            <Icon className="size-8" />
          </button>
        ))}
      </div>
      <div className={`ml-auto flex w-[171px] items-center pl-1 ${sunken}`}>
        <button aria-label="Show hidden icons" className="mr-2.5">
          <svg viewBox="0 0 8 10" className="h-2.5 w-2" fill="none" stroke="#000" strokeWidth="1.400"><path d="m1.500 4 2.500-2.500L6.500 4M1.500 8.500 4 6l2.500 2.500" /></svg>
        </button>
        <div className="flex gap-2">
          <svg viewBox="0 0 16 16" className="size-4" role="img" aria-label="Notifications"><path d="M1.500 15V1.500M2 2c3-2 5 2 9 0v7c-4 2-6-2-9 0Z" fill="#fff" stroke="#777" /><circle cx="11" cy="11" r="4.500" fill="#d82f31" stroke="#fff" strokeWidth=".8" /><path d="m9 9 4 4m0-4-4 4" stroke="#fff" strokeWidth="1.400" /></svg>
          <svg viewBox="0 0 16 16" className="size-4" role="img" aria-label="Network"><path d="M4.500 3.500h11v8h-11Z" fill="#8f9290" stroke="#5e615e" /><path d="M6 5h8v5H6Z" fill="#b9bcb9" /><path d="M7 13.500h7M10 12v2" stroke="#5e615e" /><path d="M.5 1.500h5V5L4 6.500v7H2v-7L.5 5Z" fill="#fff" stroke="#5e615e" /><path d="M3 1v3" stroke="#5e615e" /></svg>
          <svg viewBox="0 0 16 16" className="size-4" role="img" aria-label="Volume muted"><path d="M1 5h3l4-4v13l-4-4H1Z" fill="#fafafa" stroke="#777" /><circle cx="11" cy="11" r="4.500" fill="#d82f31" stroke="#fff" strokeWidth=".8" /><path d="m9 9 4 4m0-4-4 4" stroke="#fff" strokeWidth="1.400" /></svg>
        </div>
        <time className="flex-1 pl-2 text-center leading-4">1:01 PM<br />9/2/2023</time>
        <button aria-label="Show desktop">
          <svg viewBox="0 0 16 16" className="size-4"><path d="M0 2 16 3v10H0Z" fill="#2459b4" stroke="#82a8dc" strokeWidth=".8" /><path d="m1 3 14 1v3C9 7 6 8 1 10Z" fill="#5b95df" /><path d="M1 12.500h4M6 13h9" stroke="#dce9f6" /></svg>
        </button>
      </div>
    </footer>
  );
}

export default function App() {
  return (
    <div className={`flex h-screen flex-col overflow-hidden bg-[#3a6ea5] ${tahoma}`}>
      <div className="relative flex min-h-0 flex-1 justify-between">
        <div className="flex flex-col gap-[37px] pt-[7px]">
          {desktopIcons.map((item) => <DesktopItem key={item.name} {...item} />)}
        </div>
        <div className="mr-3 mb-[34px] self-end">
          <DesktopItem name="Recycle Bin" Icon={RecycleIcon} shortcut={false} />
        </div>
        <div className="absolute top-[110px] right-32 bottom-0 left-[78px] flex flex-col border border-t-[#d4d0c8] border-r-[#404040] border-b-[#404040] border-l-[#d4d0c8] bg-[#d4d0c8] pt-[3px] pr-0.5 pb-[3px] pl-[3px] shadow-[inset_1px_1px_0_white,inset_-1px_-1px_0_#808080]">
          <TitleBar />
          <TabBar />
          <Ribbon />
          <Workspace />
          <StatusBar />
        </div>
      </div>
      <Taskbar />
    </div>
  );
}
